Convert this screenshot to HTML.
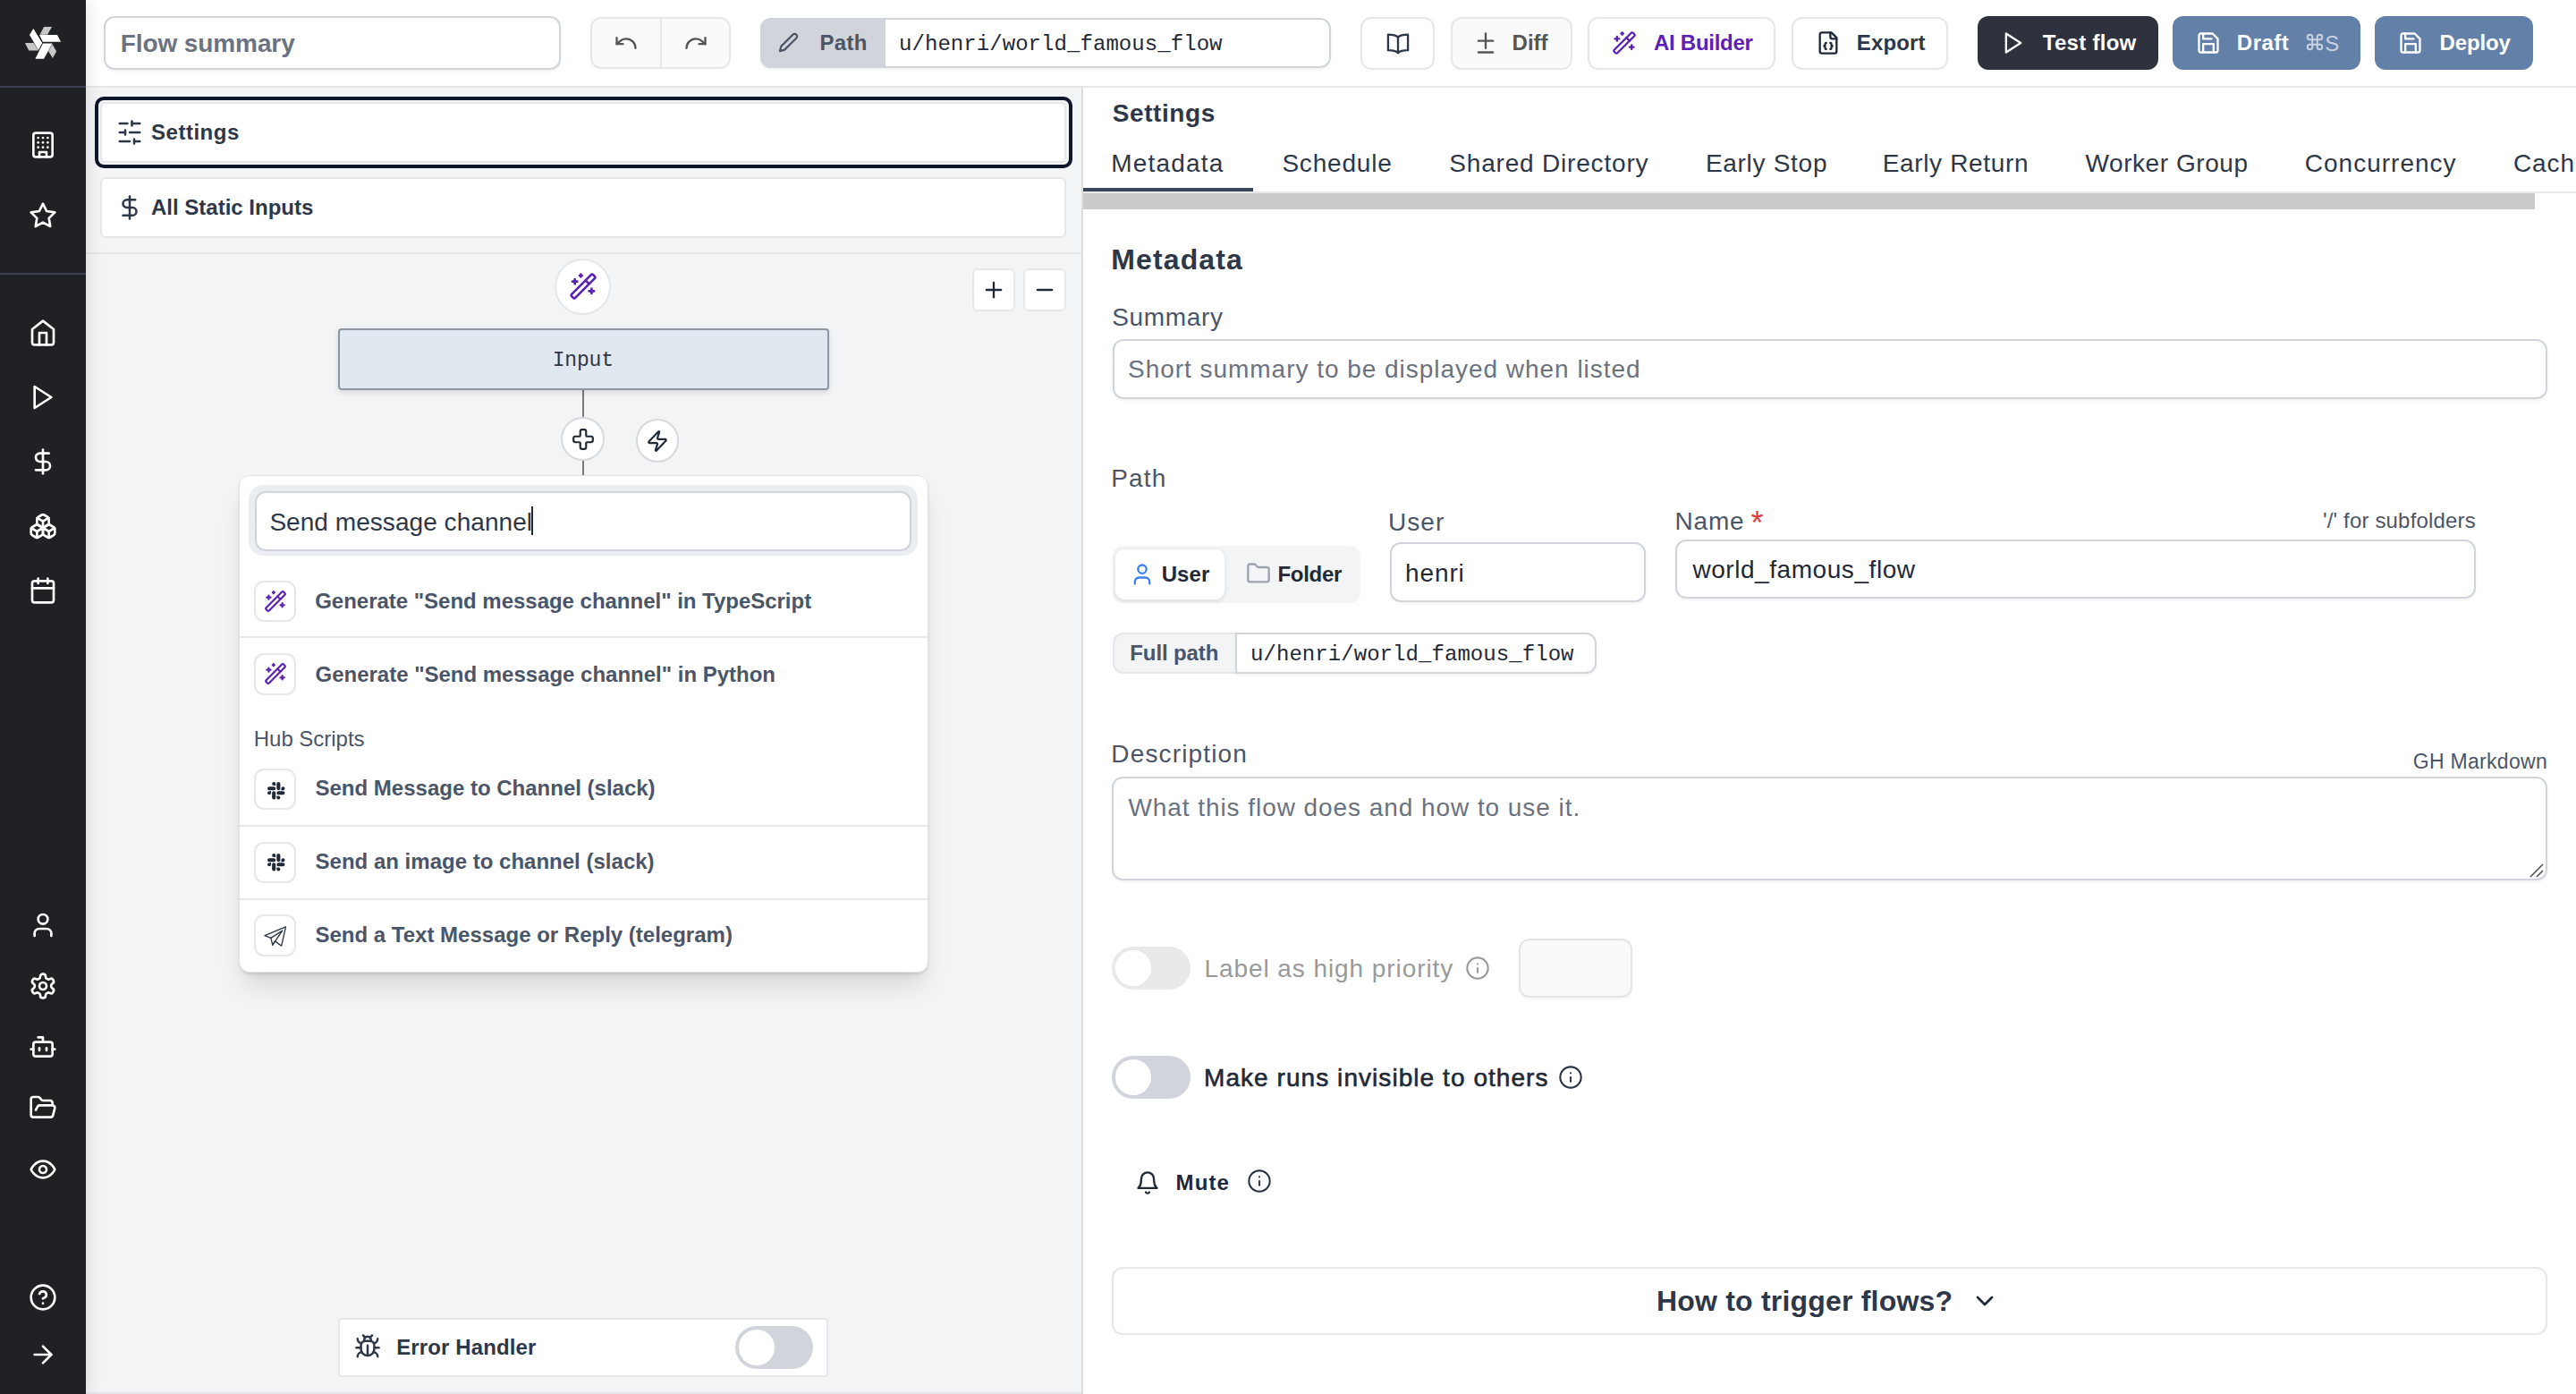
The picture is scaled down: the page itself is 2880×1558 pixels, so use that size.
<!DOCTYPE html>
<html><head><meta charset="utf-8"><title>Flow editor</title>
<style>
html,body{margin:0;padding:0;width:2880px;height:1558px;overflow:hidden;background:#fff}
.b{position:absolute;box-sizing:border-box}
.ic{position:absolute;overflow:visible}
.t{position:absolute;white-space:pre}
.ts{font-family:"Liberation Sans",sans-serif}
.tm{font-family:"Liberation Mono",monospace}
</style></head><body>
<div class="b" style="left:96px;top:98px;width:1114.0px;height:1460.0px;background:#f3f4f6"></div>
<div class="b" style="left:1211px;top:98px;width:1669.0px;height:1460.0px;background:#fff"></div>
<div class="b" style="left:1209px;top:98px;width:2.0px;height:1460.0px;background:#dddddd"></div>
<div class="b" style="left:96px;top:1556px;width:1113.0px;height:2.0px;background:#e5e7eb"></div>
<div class="b" style="left:96px;top:282px;width:1113.0px;height:2.0px;background:#e5e7eb"></div>
<div class="b" style="left:96px;top:0px;width:2784.0px;height:96.0px;background:#fff"></div>
<div class="b" style="left:96px;top:96px;width:2784.0px;height:2.0px;background:#e5e7eb"></div>
<div class="b" style="left:0px;top:0px;width:96.0px;height:1558.0px;background:#202125;box-shadow:3px 0 16px rgba(0,0,0,0.10);z-index:2"></div>
<div class="b" style="left:0px;top:96px;width:96.0px;height:2.0px;background:#3a4051;z-index:3"></div>
<div class="b" style="left:0px;top:305px;width:96.0px;height:2.0px;background:#3a4051;z-index:3"></div>
<svg class="ic" style="left:0;top:0;z-index:3" width="96" height="96" viewBox="0 0 96 96"><polygon fill="#fff" points="33.0,39.0 37.3,32.1 47.2,48.1 42.9,55.9"/><polygon fill="#c8c8c8" points="44.5,38.7 49.1,30.0 58.0,30.0 53.0,38.7"/><polygon fill="#fff" points="44.0,39.0 64.0,39.0 68.1,46.8 47.9,46.8"/><polygon fill="#c8c8c8" points="27.9,48.1 37.6,48.1 42.9,56.4 32.3,56.4"/><polygon fill="#fff" points="47.9,48.6 58.5,48.6 49.1,65.8 39.4,65.8"/><polygon fill="#c8c8c8" points="54.1,57.3 58.5,49.3 63.1,57.6 58.9,64.9"/></svg>
<svg class="ic" style="z-index:3;left:32.0px;top:145.9px" width="32" height="32" viewBox="0 0 24 24" fill="none" stroke="#ffffff" stroke-width="2" stroke-linecap="round" stroke-linejoin="round"><rect width="16" height="20" x="4" y="2" rx="2" ry="2"/><path d="M9 22v-4h6v4"/><path d="M8 6h.01"/><path d="M16 6h.01"/><path d="M12 6h.01"/><path d="M12 10h.01"/><path d="M12 14h.01"/><path d="M16 10h.01"/><path d="M16 14h.01"/><path d="M8 10h.01"/><path d="M8 14h.01"/></svg>
<svg class="ic" style="z-index:3;left:32.0px;top:225.0px" width="32" height="32" viewBox="0 0 24 24" fill="none" stroke="#ffffff" stroke-width="2" stroke-linecap="round" stroke-linejoin="round"><polygon points="12 2 15.09 8.26 22 9.27 17 14.14 18.18 21.02 12 17.77 5.82 21.02 7 14.14 2 9.27 8.91 8.26 12 2"/></svg>
<svg class="ic" style="z-index:3;left:32.0px;top:355.7px" width="32" height="32" viewBox="0 0 24 24" fill="none" stroke="#ffffff" stroke-width="2" stroke-linecap="round" stroke-linejoin="round"><path d="m3 9 9-7 9 7v11a2 2 0 0 1-2 2H5a2 2 0 0 1-2-2z"/><polyline points="9 22 9 12 15 12 15 22"/></svg>
<svg class="ic" style="z-index:3;left:32.0px;top:427.9px" width="32" height="32" viewBox="0 0 24 24" fill="none" stroke="#ffffff" stroke-width="2" stroke-linecap="round" stroke-linejoin="round"><polygon points="5 3 19 12 5 21 5 3"/></svg>
<svg class="ic" style="z-index:3;left:32.0px;top:500.0px" width="32" height="32" viewBox="0 0 24 24" fill="none" stroke="#ffffff" stroke-width="2" stroke-linecap="round" stroke-linejoin="round"><line x1="12" x2="12" y1="2" y2="22"/><path d="M17 5H9.5a3.5 3.5 0 0 0 0 7h5a3.5 3.5 0 0 1 0 7H6"/></svg>
<svg class="ic" style="z-index:3;left:32.0px;top:572.0px" width="32" height="32" viewBox="0 0 24 24" fill="none" stroke="#ffffff" stroke-width="2" stroke-linecap="round" stroke-linejoin="round"><path d="M2.97 12.92A2 2 0 0 0 2 14.63v3.24a2 2 0 0 0 .97 1.71l3 1.8a2 2 0 0 0 2.060 0L12 19v-5.5l-5-3-4.03 2.420Z"/><path d="m7 16.5-4.740-2.850"/><path d="m7 16.5 5-3"/><path d="M7 16.5v5.170"/><path d="M12 13.5V19l3.970 2.380a2 2 0 0 0 2.060 0l3-1.8a2 2 0 0 0 .970-1.710v-3.240a2 2 0 0 0-.970-1.710L17 10.5l-5 3Z"/><path d="m17 16.5-5-3"/><path d="m17 16.5 4.740-2.850"/><path d="M17 16.5v5.170"/><path d="M7.970 4.420A2 2 0 0 0 7 6.130v4.370l5 3 5-3V6.130a2 2 0 0 0-.970-1.710l-3-1.8a2 2 0 0 0-2.060 0l-3 1.8Z"/><path d="M12 8 7.260 5.150"/><path d="m12 8 4.740-2.850"/><path d="M12 13.5V8"/></svg>
<svg class="ic" style="z-index:3;left:32.0px;top:644.0px" width="32" height="32" viewBox="0 0 24 24" fill="none" stroke="#ffffff" stroke-width="2" stroke-linecap="round" stroke-linejoin="round"><rect width="18" height="18" x="3" y="4" rx="2" ry="2"/><line x1="16" x2="16" y1="2" y2="6"/><line x1="8" x2="8" y1="2" y2="6"/><line x1="3" x2="21" y1="10" y2="10"/></svg>
<svg class="ic" style="z-index:3;left:32.0px;top:1018.0px" width="32" height="32" viewBox="0 0 24 24" fill="none" stroke="#ffffff" stroke-width="2" stroke-linecap="round" stroke-linejoin="round"><path d="M19 21v-2a4 4 0 0 0-4-4H9a4 4 0 0 0-4 4v2"/><circle cx="12" cy="7" r="4"/></svg>
<svg class="ic" style="z-index:3;left:32.0px;top:1086.0px" width="32" height="32" viewBox="0 0 24 24" fill="none" stroke="#ffffff" stroke-width="2" stroke-linecap="round" stroke-linejoin="round"><path d="M12.22 2h-.44a2 2 0 0 0-2 2v.18a2 2 0 0 1-1 1.73l-.43.25a2 2 0 0 1-2 0l-.15-.08a2 2 0 0 0-2.73.73l-.22.38a2 2 0 0 0 .73 2.73l.15.1a2 2 0 0 1 1 1.72v.51a2 2 0 0 1-1 1.74l-.15.09a2 2 0 0 0-.73 2.73l.22.38a2 2 0 0 0 2.73.73l.15-.08a2 2 0 0 1 2 0l.43.25a2 2 0 0 1 1 1.73V20a2 2 0 0 0 2 2h.44a2 2 0 0 0 2-2v-.18a2 2 0 0 1 1-1.73l.43-.25a2 2 0 0 1 2 0l.15.08a2 2 0 0 0 2.73-.73l.22-.39a2 2 0 0 0-.73-2.73l-.15-.08a2 2 0 0 1-1-1.74v-.5a2 2 0 0 1 1-1.74l.15-.09a2 2 0 0 0 .73-2.73l-.22-.38a2 2 0 0 0-2.73-.73l-.15.08a2 2 0 0 1-2 0l-.43-.25a2 2 0 0 1-1-1.73V4a2 2 0 0 0-2-2z"/><circle cx="12" cy="12" r="3"/></svg>
<svg class="ic" style="z-index:3;left:32.0px;top:1153.5px" width="32" height="32" viewBox="0 0 24 24" fill="none" stroke="#ffffff" stroke-width="2" stroke-linecap="round" stroke-linejoin="round"><path d="M12 8V4H8"/><rect width="16" height="12" x="4" y="8" rx="2"/><path d="M2 14h2"/><path d="M20 14h2"/><path d="M15 13v2"/><path d="M9 13v2"/></svg>
<svg class="ic" style="z-index:3;left:32.0px;top:1221.7px" width="32" height="32" viewBox="0 0 24 24" fill="none" stroke="#ffffff" stroke-width="2" stroke-linecap="round" stroke-linejoin="round"><path d="m6 14 1.5-2.9A2 2 0 0 1 9.24 10H20a2 2 0 0 1 1.94 2.5l-1.54 6a2 2 0 0 1-1.95 1.5H4a2 2 0 0 1-2-2V5a2 2 0 0 1 2-2h3.9a2 2 0 0 1 1.69.9l.81 1.2a2 2 0 0 0 1.67.9H18a2 2 0 0 1 2 2v2"/></svg>
<svg class="ic" style="z-index:3;left:32.0px;top:1290.7px" width="32" height="32" viewBox="0 0 24 24" fill="none" stroke="#ffffff" stroke-width="2" stroke-linecap="round" stroke-linejoin="round"><path d="M2 12s3-7 10-7 10 7 10 7-3 7-10 7-10-7-10-7Z"/><circle cx="12" cy="12" r="3"/></svg>
<svg class="ic" style="z-index:3;left:32.0px;top:1434.4px" width="32" height="32" viewBox="0 0 24 24" fill="none" stroke="#ffffff" stroke-width="2" stroke-linecap="round" stroke-linejoin="round"><circle cx="12" cy="12" r="10"/><path d="M9.09 9a3 3 0 0 1 5.83 1c0 2-3 3-3 3"/><path d="M12 17h.01"/></svg>
<svg class="ic" style="z-index:3;left:32.0px;top:1498.0px" width="32" height="32" viewBox="0 0 24 24" fill="none" stroke="#ffffff" stroke-width="2" stroke-linecap="round" stroke-linejoin="round"><path d="M5 12h14"/><path d="m12 5 7 7-7 7"/></svg>
<div class="b" style="left:116px;top:18px;width:511.0px;height:60.0px;border:2px solid #d1d5db;border-radius:12px;background:#fff;box-shadow:0 2px 3px rgba(0,0,0,0.05)"></div>
<div class="b" style="left:660px;top:18.5px;width:157.0px;height:58.5px;border:2px solid #e5e7eb;border-radius:12px;background:#fafafa"></div>
<div class="b" style="left:738px;top:19px;width:2.0px;height:57.0px;background:#e5e7eb"></div>
<svg class="ic" style="left:685.8px;top:33.9px" width="28" height="28" viewBox="0 0 24 24" fill="none" stroke="#555555" stroke-width="2" stroke-linecap="round" stroke-linejoin="round"><path d="M3 7v6h6"/><path d="M21 17a9 9 0 0 0-9-9 9 9 0 0 0-6 2.3L3 13"/></svg>
<svg class="ic" style="left:764.1px;top:33.9px" width="28" height="28" viewBox="0 0 24 24" fill="none" stroke="#555555" stroke-width="2" stroke-linecap="round" stroke-linejoin="round"><path d="M21 7v6h-6"/><path d="M3 17a9 9 0 0 1 9-9 9 9 0 0 1 6 2.3l3 2.7"/></svg>
<div class="b" style="left:850px;top:20px;width:638.0px;height:55.5px;border:2px solid #d1d5db;border-radius:12px;background:#fff;box-shadow:0 2px 3px rgba(0,0,0,0.05)"></div>
<div class="b" style="left:850px;top:20px;width:140.0px;height:55.5px;background:#d1d5db;border-radius:12px 0 0 12px"></div>
<svg class="ic" style="left:870.0px;top:36.0px" width="23" height="23" viewBox="0 0 24 24" fill="none" stroke="#4a5568" stroke-width="2.3" stroke-linecap="round" stroke-linejoin="round"><path d="M17 3a2.85 2.83 0 1 1 4 4L7.5 20.5 2 22l1.5-5.5Z"/></svg>
<div class="b" style="left:1521px;top:18.5px;width:83.0px;height:59.0px;border:2px solid #e5e7eb;border-radius:12px;background:#fff"></div>
<svg class="ic" style="left:1549.0px;top:34.0px" width="28" height="28" viewBox="0 0 24 24" fill="none" stroke="#2e3748" stroke-width="2" stroke-linecap="round" stroke-linejoin="round"><path d="M12 6.5C10.5 5 8 4 2.5 4v15c5.5 0 8 1 9.5 2.5 1.5-1.5 4-2.5 9.5-2.5V4C16 4 13.5 5 12 6.5Z"/><path d="M12 6.5v15"/></svg>
<div class="b" style="left:1621.5px;top:18.5px;width:136.0px;height:59.0px;border:2px solid #e5e7eb;border-radius:12px;background:#fafafa"></div>
<svg class="ic" style="left:1646.5px;top:34.2px" width="28" height="28" viewBox="0 0 24 24" fill="none" stroke="#555555" stroke-width="2" stroke-linecap="round" stroke-linejoin="round"><path d="M12 3v14"/><path d="M5 10h14"/><path d="M5 21h14"/></svg>
<div class="b" style="left:1774.5px;top:18.5px;width:210.5px;height:59.0px;border:2px solid #e5e7eb;border-radius:12px;background:#fff"></div>
<svg class="ic" style="left:1801.9px;top:33.8px" width="28" height="28" viewBox="0 0 24 24" fill="none" stroke="#5b21b6" stroke-width="2" stroke-linecap="round" stroke-linejoin="round"><path d="m21.64 3.64-1.28-1.28a1.21 1.21 0 0 0-1.72 0L2.36 18.64a1.21 1.21 0 0 0 0 1.72l1.28 1.28a1.2 1.2 0 0 0 1.72 0L21.640 5.360a1.2 1.2 0 0 0 0-1.720"/><path d="m14 7 3 3"/><path d="M5 6v4"/><path d="M19 14v4"/><path d="M10 2v2"/><path d="M7 8H3"/><path d="M21 16h-4"/><path d="M11 3H9"/></svg>
<div class="b" style="left:2002.5px;top:18.5px;width:175.5px;height:59.0px;border:2px solid #e5e7eb;border-radius:12px;background:#fff"></div>
<svg class="ic" style="left:2029.8px;top:33.8px" width="28" height="28" viewBox="0 0 24 24" fill="none" stroke="#1f2937" stroke-width="2" stroke-linecap="round" stroke-linejoin="round"><path d="M15 2H6a2 2 0 0 0-2 2v16a2 2 0 0 0 2 2h12a2 2 0 0 0 2-2V7Z"/><path d="M14 2v4a2 2 0 0 0 2 2h4"/><path d="M10 12a1 1 0 0 0-1 1v1a1 1 0 0 1-1 1 1 1 0 0 1 1 1v1a1 1 0 0 0 1 1"/><path d="M14 18a1 1 0 0 0 1-1v-1a1 1 0 0 1 1-1 1 1 0 0 1-1-1v-1a1 1 0 0 0-1-1"/></svg>
<div class="b" style="left:2211px;top:18px;width:202.0px;height:60.0px;border-radius:12px;background:#2e323e"></div>
<svg class="ic" style="left:2237.0px;top:34.0px" width="28" height="28" viewBox="0 0 24 24" fill="none" stroke="#ffffff" stroke-width="2" stroke-linecap="round" stroke-linejoin="round"><polygon points="5 3 19 12 5 21 5 3"/></svg>
<div class="b" style="left:2429px;top:18px;width:209.7px;height:60.0px;border-radius:12px;background:#6380a9"></div>
<svg class="ic" style="left:2455.0px;top:33.9px" width="28" height="28" viewBox="0 0 24 24" fill="none" stroke="#ffffff" stroke-width="2" stroke-linecap="round" stroke-linejoin="round"><path d="M19 21H5a2 2 0 0 1-2-2V5a2 2 0 0 1 2-2h11l5 5v11a2 2 0 0 1-2 2z"/><polyline points="17 21 17 13 7 13 7 21"/><polyline points="7 3 7 8 15 8"/></svg>
<div class="b" style="left:2655px;top:18px;width:177.0px;height:60.0px;border-radius:12px;background:#6380a9"></div>
<svg class="ic" style="left:2681.0px;top:33.9px" width="28" height="28" viewBox="0 0 24 24" fill="none" stroke="#ffffff" stroke-width="2" stroke-linecap="round" stroke-linejoin="round"><path d="M19 21H5a2 2 0 0 1-2-2V5a2 2 0 0 1 2-2h11l5 5v11a2 2 0 0 1-2 2z"/><polyline points="17 21 17 13 7 13 7 21"/><polyline points="7 3 7 8 15 8"/></svg>
<svg class="ic" style="left:2576.5px;top:36px" width="22" height="22" viewBox="0 0 24 24" fill="none" stroke="#c9d2e0" stroke-width="2.2"><path d="M15 6v12a3 3 0 1 0 3-3H6a3 3 0 1 0 3 3V6a3 3 0 1 0-3 3h12a3 3 0 1 0-3-3"/></svg>
<div class="b" style="left:106px;top:108px;width:1093.0px;height:80.0px;border:4px solid #0f172a;border-radius:10px"></div>
<div class="b" style="left:112px;top:114px;width:1080.0px;height:68.0px;border:2px solid #e5e7eb;border-radius:6px;background:#fff"></div>
<svg class="ic" style="left:130.3px;top:133.0px" width="30" height="30" viewBox="0 0 24 24" fill="none" stroke="#2e3748" stroke-width="2" stroke-linecap="round" stroke-linejoin="round"><line x1="21" x2="14" y1="4" y2="4"/><line x1="10" x2="3" y1="4" y2="4"/><line x1="21" x2="12" y1="12" y2="12"/><line x1="8" x2="3" y1="12" y2="12"/><line x1="21" x2="16" y1="20" y2="20"/><line x1="12" x2="3" y1="20" y2="20"/><line x1="14" x2="14" y1="2" y2="6"/><line x1="8" x2="8" y1="10" y2="14"/><line x1="16" x2="16" y1="18" y2="22"/></svg>
<div class="b" style="left:112px;top:198px;width:1080.0px;height:68.0px;border:2px solid #e5e7eb;border-radius:6px;background:#fff"></div>
<svg class="ic" style="left:130.2px;top:217.0px" width="30" height="30" viewBox="0 0 24 24" fill="none" stroke="#2e3748" stroke-width="2" stroke-linecap="round" stroke-linejoin="round"><line x1="12" x2="12" y1="2" y2="22"/><path d="M17 5H9.5a3.5 3.5 0 0 0 0 7h5a3.5 3.5 0 0 1 0 7H6"/></svg>
<div class="b" style="left:620px;top:288.5px;width:63.0px;height:63.0px;border:2px solid #e5e7eb;border-radius:50%;background:#fff"></div>
<svg class="ic" style="left:635.5px;top:303.5px" width="32" height="32" viewBox="0 0 24 24" fill="none" stroke="#5b21b6" stroke-width="2" stroke-linecap="round" stroke-linejoin="round"><path d="m21.64 3.64-1.28-1.28a1.21 1.21 0 0 0-1.72 0L2.36 18.64a1.21 1.21 0 0 0 0 1.72l1.28 1.28a1.2 1.2 0 0 0 1.72 0L21.640 5.360a1.2 1.2 0 0 0 0-1.720"/><path d="m14 7 3 3"/><path d="M5 6v4"/><path d="M19 14v4"/><path d="M10 2v2"/><path d="M7 8H3"/><path d="M21 16h-4"/><path d="M11 3H9"/></svg>
<div class="b" style="left:1087px;top:300px;width:48.0px;height:48.0px;border:2px solid #e5e7eb;border-radius:6px;background:#fff"></div>
<svg class="ic" style="left:1097.0px;top:310.0px" width="28" height="28" viewBox="0 0 24 24" fill="none" stroke="#1f2937" stroke-width="2" stroke-linecap="round" stroke-linejoin="round"><path d="M5 12h14"/><path d="M12 5v14"/></svg>
<div class="b" style="left:1144px;top:300px;width:48.0px;height:48.0px;border:2px solid #e5e7eb;border-radius:6px;background:#fff"></div>
<svg class="ic" style="left:1154.0px;top:310.0px" width="28" height="28" viewBox="0 0 24 24" fill="none" stroke="#1f2937" stroke-width="2" stroke-linecap="round" stroke-linejoin="round"><path d="M5 12h14"/></svg>
<div class="b" style="left:651px;top:436px;width:2.0px;height:95.0px;background:#7a7a7a"></div>
<div class="b" style="left:377.5px;top:367.3px;width:549.0px;height:69.0px;border:2px solid #8f96a3;border-radius:4px;background:#e2e8f0;box-shadow:0 3px 6px rgba(0,0,0,0.12)"></div>
<div class="b" style="left:627.4px;top:466.3px;width:48.7px;height:49.2px;border:2px solid #d6d9de;border-radius:50%;background:#fff"></div>
<svg class="ic" style="left:638.8px;top:478.0px" width="26" height="26" viewBox="0 0 24 24" fill="none" stroke="#1f2937" stroke-width="2" stroke-linecap="round" stroke-linejoin="round"><path d="M4 9a2 2 0 0 0-2 2v2a2 2 0 0 0 2 2h4a1 1 0 0 1 1 1v4a2 2 0 0 0 2 2h2a2 2 0 0 0 2-2v-4a1 1 0 0 1 1-1h4a2 2 0 0 0 2-2v-2a2 2 0 0 0-2-2h-4a1 1 0 0 1-1-1V4a2 2 0 0 0-2-2h-2a2 2 0 0 0-2 2v4a1 1 0 0 1-1 1z"/></svg>
<div class="b" style="left:710.6px;top:468.2px;width:48.4px;height:48.8px;border:2px solid #d6d9de;border-radius:50%;background:#fff"></div>
<svg class="ic" style="left:721.8px;top:479.6px" width="26" height="26" viewBox="0 0 24 24" fill="none" stroke="#1f2937" stroke-width="2" stroke-linecap="round" stroke-linejoin="round"><path d="M4 14a1 1 0 0 1-.78-1.63l9.9-10.2a.5.5 0 0 1 .86.46l-1.92 6.02A1 1 0 0 0 13 10h7a1 1 0 0 1 .78 1.63l-9.9 10.2a.5.5 0 0 1-.86-.46l1.92-6.02A1 1 0 0 0 11 14z"/></svg>
<div class="b" style="left:266.5px;top:530.5px;width:771.0px;height:556.5px;border:1px solid #e1e3e7;border-radius:12px;background:#fff;box-shadow:0 2px 3px rgba(0,0,0,0.08),0 20px 30px -6px rgba(0,0,0,0.12),0 8px 12px -8px rgba(0,0,0,0.10)"></div>
<div class="b" style="left:277.7px;top:542px;width:748.3px;height:79.1px;border-radius:16px;background:#eaedf1"></div>
<div class="b" style="left:285px;top:548.5px;width:734.0px;height:67.1px;border:2px solid #d1d5db;border-radius:12px;background:#fff"></div>
<div class="b" style="left:594px;top:566px;width:2.0px;height:32.0px;background:#1f2937"></div>
<div class="b" style="left:284px;top:648.8px;width:47.3px;height:46.1px;border:2px solid #e5e7eb;border-radius:11px;background:#fff"></div>
<div class="b" style="left:284px;top:730.4px;width:47.3px;height:46.6px;border:2px solid #e5e7eb;border-radius:11px;background:#fff"></div>
<div class="b" style="left:284px;top:859px;width:47.3px;height:46.0px;border:2px solid #e5e7eb;border-radius:11px;background:#fff"></div>
<div class="b" style="left:284px;top:940.7px;width:47.3px;height:46.6px;border:2px solid #e5e7eb;border-radius:11px;background:#fff"></div>
<div class="b" style="left:284px;top:1022.4px;width:47.3px;height:46.6px;border:2px solid #e5e7eb;border-radius:11px;background:#fff"></div>
<div class="b" style="left:267.5px;top:711px;width:769.0px;height:2.0px;background:#e5e7eb"></div>
<div class="b" style="left:267.5px;top:922px;width:769.0px;height:2.0px;background:#e5e7eb"></div>
<div class="b" style="left:267.5px;top:1004px;width:769.0px;height:2.0px;background:#e5e7eb"></div>
<svg class="ic" style="left:295.0px;top:658.9px" width="26" height="26" viewBox="0 0 24 24" fill="none" stroke="#5b21b6" stroke-width="2" stroke-linecap="round" stroke-linejoin="round"><path d="m21.64 3.64-1.28-1.28a1.21 1.21 0 0 0-1.72 0L2.36 18.64a1.21 1.21 0 0 0 0 1.72l1.28 1.28a1.2 1.2 0 0 0 1.72 0L21.640 5.360a1.2 1.2 0 0 0 0-1.720"/><path d="m14 7 3 3"/><path d="M5 6v4"/><path d="M19 14v4"/><path d="M10 2v2"/><path d="M7 8H3"/><path d="M21 16h-4"/><path d="M11 3H9"/></svg>
<svg class="ic" style="left:295.2px;top:740.2px" width="26" height="26" viewBox="0 0 24 24" fill="none" stroke="#5b21b6" stroke-width="2" stroke-linecap="round" stroke-linejoin="round"><path d="m21.64 3.64-1.28-1.28a1.21 1.21 0 0 0-1.72 0L2.36 18.64a1.21 1.21 0 0 0 0 1.72l1.28 1.28a1.2 1.2 0 0 0 1.72 0L21.640 5.360a1.2 1.2 0 0 0 0-1.720"/><path d="m14 7 3 3"/><path d="M5 6v4"/><path d="M19 14v4"/><path d="M10 2v2"/><path d="M7 8H3"/><path d="M21 16h-4"/><path d="M11 3H9"/></svg>
<svg class="ic" style="left:290px;top:1030px" width="36" height="32" viewBox="290 1030 36 32" fill="none" stroke="#2e3748" stroke-width="1.35" stroke-linejoin="round" stroke-linecap="round"><path d="M319.5 1035.8 296 1045.6 302.8 1048.4 304.8 1056.2 307.6 1051.9 314.7 1057.2Z"/><path d="M302.8 1048.4 315.7 1040.1 304.8 1056.2"/></svg>
<svg class="ic" style="left:298.6px;top:873.9px" width="19.5" height="19.5" viewBox="0 0 24 24" fill="#1f2937"><path d="M5.042 15.165a2.528 2.528 0 0 1-2.52 2.523A2.528 2.528 0 0 1 0 15.165a2.527 2.527 0 0 1 2.522-2.52h2.52v2.52zM6.313 15.165a2.527 2.527 0 0 1 2.521-2.52 2.527 2.527 0 0 1 2.521 2.52v6.313A2.528 2.528 0 0 1 8.834 24a2.528 2.528 0 0 1-2.521-2.522v-6.313zM8.834 5.042a2.528 2.528 0 0 1-2.521-2.52A2.528 2.528 0 0 1 8.834 0a2.528 2.528 0 0 1 2.521 2.522v2.52H8.834zM8.834 6.313a2.528 2.528 0 0 1 2.521 2.521 2.528 2.528 0 0 1-2.521 2.521H2.522A2.528 2.528 0 0 1 0 8.834a2.528 2.528 0 0 1 2.522-2.521h6.312zM18.956 8.834a2.528 2.528 0 0 1 2.522-2.521A2.528 2.528 0 0 1 24 8.834a2.528 2.528 0 0 1-2.522 2.521h-2.522V8.834zM17.688 8.834a2.528 2.528 0 0 1-2.523 2.521 2.527 2.527 0 0 1-2.52-2.521V2.522A2.527 2.527 0 0 1 15.165 0a2.528 2.528 0 0 1 2.523 2.522v6.312zM15.165 18.956a2.528 2.528 0 0 1 2.523 2.522A2.528 2.528 0 0 1 15.165 24a2.527 2.527 0 0 1-2.52-2.522v-2.522h2.52zM15.165 17.688a2.527 2.527 0 0 1-2.52-2.523 2.526 2.526 0 0 1 2.52-2.52h6.313A2.527 2.527 0 0 1 24 15.165a2.528 2.528 0 0 1-2.522 2.523h-6.313z"/></svg>
<svg class="ic" style="left:298.6px;top:954.2px" width="19.5" height="19.5" viewBox="0 0 24 24" fill="#1f2937"><path d="M5.042 15.165a2.528 2.528 0 0 1-2.52 2.523A2.528 2.528 0 0 1 0 15.165a2.527 2.527 0 0 1 2.522-2.52h2.52v2.52zM6.313 15.165a2.527 2.527 0 0 1 2.521-2.52 2.527 2.527 0 0 1 2.521 2.52v6.313A2.528 2.528 0 0 1 8.834 24a2.528 2.528 0 0 1-2.521-2.522v-6.313zM8.834 5.042a2.528 2.528 0 0 1-2.521-2.52A2.528 2.528 0 0 1 8.834 0a2.528 2.528 0 0 1 2.521 2.522v2.52H8.834zM8.834 6.313a2.528 2.528 0 0 1 2.521 2.521 2.528 2.528 0 0 1-2.521 2.521H2.522A2.528 2.528 0 0 1 0 8.834a2.528 2.528 0 0 1 2.522-2.521h6.312zM18.956 8.834a2.528 2.528 0 0 1 2.522-2.521A2.528 2.528 0 0 1 24 8.834a2.528 2.528 0 0 1-2.522 2.521h-2.522V8.834zM17.688 8.834a2.528 2.528 0 0 1-2.523 2.521 2.527 2.527 0 0 1-2.52-2.521V2.522A2.527 2.527 0 0 1 15.165 0a2.528 2.528 0 0 1 2.523 2.522v6.312zM15.165 18.956a2.528 2.528 0 0 1 2.523 2.522A2.528 2.528 0 0 1 15.165 24a2.527 2.527 0 0 1-2.52-2.522v-2.522h2.52zM15.165 17.688a2.527 2.527 0 0 1-2.52-2.523 2.526 2.526 0 0 1 2.52-2.52h6.313A2.527 2.527 0 0 1 24 15.165a2.528 2.528 0 0 1-2.522 2.523h-6.313z"/></svg>
<div class="b" style="left:377.6px;top:1473px;width:548.4px;height:66.0px;border:2px solid #e5e7eb;border-radius:4px;background:#fff"></div>
<svg class="ic" style="left:395.9px;top:1490.0px" width="30" height="30" viewBox="0 0 24 24" fill="none" stroke="#2e3748" stroke-width="2" stroke-linecap="round" stroke-linejoin="round"><path d="m8 2 1.88 1.88"/><path d="M14.12 3.88 16 2"/><path d="M9 7.13v-1a3.003 3.003 0 1 1 6 0v1"/><path d="M12 20c-3.3 0-6-2.7-6-6v-3a4 4 0 0 1 4-4h4a4 4 0 0 1 4 4v3c0 3.3-2.7 6-6 6"/><path d="M12 20v-9"/><path d="M6.53 9C4.6 8.8 3 7.1 3 5"/><path d="M6 13H2"/><path d="M3 21c0-2.1 1.7-3.9 3.8-4"/><path d="M20.97 5c0 2.1-1.6 3.8-3.5 4"/><path d="M22 13h-4"/><path d="M17.2 17c2.1.1 3.8 1.9 3.8 4"/></svg>
<div class="b" style="left:821.7px;top:1481.7px;width:87.1px;height:48.3px;border-radius:24px;background:#d1d5db"></div>
<div class="b" style="left:825.7px;top:1485.7px;width:40.3px;height:40.3px;border-radius:50%;background:#fff"></div>
<div class="b" style="left:1211px;top:214px;width:1669.0px;height:2.0px;background:#e5e7eb"></div>
<div class="b" style="left:1211px;top:210px;width:190.0px;height:4.0px;background:#3b4658"></div>
<div class="b" style="left:1211px;top:216px;width:1623.0px;height:17.5px;background:#cbcbcb"></div>
<div class="b" style="left:1243.5px;top:378.5px;width:1604.5px;height:67.0px;border:2px solid #d1d5db;border-radius:12px;background:#fff;box-shadow:0 2px 3px rgba(0,0,0,0.05)"></div>
<div class="b" style="left:1243.6px;top:610px;width:277.0px;height:64.0px;border-radius:12px;background:#f3f4f6"></div>
<div class="b" style="left:1246.8px;top:614px;width:122.0px;height:56.0px;border-radius:10px;background:#fff;box-shadow:0 2px 6px rgba(0,0,0,0.10)"></div>
<svg class="ic" style="left:1262.8px;top:627.5px" width="28" height="28" viewBox="0 0 24 24" fill="none" stroke="#3b82f6" stroke-width="2" stroke-linecap="round" stroke-linejoin="round"><path d="M19 21v-2a4 4 0 0 0-4-4H9a4 4 0 0 0-4 4v2"/><circle cx="12" cy="7" r="4"/></svg>
<svg class="ic" style="left:1392.8px;top:627.2px" width="28" height="28" viewBox="0 0 24 24" fill="none" stroke="#9ca3af" stroke-width="2" stroke-linecap="round" stroke-linejoin="round"><path d="M20 20a2 2 0 0 0 2-2V8a2 2 0 0 0-2-2h-7.9a2 2 0 0 1-1.69-.9L9.6 3.9A2 2 0 0 0 7.93 3H4a2 2 0 0 0-2 2v13a2 2 0 0 0 2 2Z"/></svg>
<div class="b" style="left:1553.6px;top:606.3px;width:286.4px;height:67.1px;border:2px solid #d1d5db;border-radius:12px;background:#fff;box-shadow:0 2px 3px rgba(0,0,0,0.05)"></div>
<div class="b" style="left:1873.4px;top:602.5px;width:894.6px;height:66.5px;border:2px solid #d1d5db;border-radius:12px;background:#fff;box-shadow:0 2px 3px rgba(0,0,0,0.05)"></div>
<span class="t ts" style="left:1957.5px;top:567px;font-size:36px;line-height:36px;color:#dc3c3c">*</span>
<div class="b" style="left:1243.7px;top:706.6px;width:139.3px;height:46.9px;border:2px solid #e5e7eb;border-right:none;border-radius:12px 0 0 12px;background:#f3f4f6"></div>
<div class="b" style="left:1381px;top:706.6px;width:404.4px;height:46.9px;border:2px solid #d1d5db;border-radius:0 12px 12px 0;background:#fff;box-shadow:0 2px 3px rgba(0,0,0,0.05)"></div>
<div class="b" style="left:1243px;top:868px;width:1605.0px;height:116.0px;border:2px solid #d1d5db;border-radius:12px;background:#fff;box-shadow:0 2px 3px rgba(0,0,0,0.05)"></div>
<svg class="ic" style="left:2825px;top:962px" width="20" height="20" viewBox="0 0 20 20" stroke="#555" stroke-width="1.6"><path d="M4 18 18 4M11 18 18 11"/></svg>
<div class="b" style="left:1243px;top:1058px;width:88.0px;height:48.0px;border-radius:24px;background:#e9e9ea"></div>
<div class="b" style="left:1246.5px;top:1062px;width:40.5px;height:40.0px;border-radius:50%;background:#fff"></div>
<svg class="ic" style="left:1638.2px;top:1068.0px" width="28" height="28" viewBox="0 0 24 24" fill="none" stroke="#9a9a9a" stroke-width="1.8" stroke-linecap="round" stroke-linejoin="round"><circle cx="12" cy="12" r="10"/><path d="M12 16v-4"/><path d="M12 8h.01"/></svg>
<div class="b" style="left:1698.4px;top:1048.5px;width:126.6px;height:66.0px;border:2px solid #e5e5e5;border-radius:12px;background:#fafafa;box-shadow:0 2px 3px rgba(0,0,0,0.04)"></div>
<div class="b" style="left:1243px;top:1180px;width:88.0px;height:48.0px;border-radius:24px;background:#d1d5db"></div>
<div class="b" style="left:1246.5px;top:1184px;width:40.5px;height:40.0px;border-radius:50%;background:#fff"></div>
<svg class="ic" style="left:1741.8px;top:1190.2px" width="28" height="28" viewBox="0 0 24 24" fill="none" stroke="#2e3748" stroke-width="1.8" stroke-linecap="round" stroke-linejoin="round"><circle cx="12" cy="12" r="10"/><path d="M12 16v-4"/><path d="M12 8h.01"/></svg>
<svg class="ic" style="left:1269.1px;top:1308.3px" width="28" height="28" viewBox="0 0 24 24" fill="none" stroke="#1f2937" stroke-width="2" stroke-linecap="round" stroke-linejoin="round"><path d="M6 8a6 6 0 0 1 12 0c0 7 3 9 3 9H3s3-2 3-9"/><path d="M10.3 21a1.94 1.94 0 0 0 3.4 0"/></svg>
<svg class="ic" style="left:1394.0px;top:1306.3px" width="28" height="28" viewBox="0 0 24 24" fill="none" stroke="#2e3748" stroke-width="1.8" stroke-linecap="round" stroke-linejoin="round"><circle cx="12" cy="12" r="10"/><path d="M12 16v-4"/><path d="M12 8h.01"/></svg>
<div class="b" style="left:1243px;top:1416px;width:1605.0px;height:76.0px;border:2px solid #e5e7eb;border-radius:12px;background:#fff"></div>
<svg class="ic" style="left:2203.2px;top:1438.2px" width="32" height="32" viewBox="0 0 24 24" fill="none" stroke="#1f2937" stroke-width="2" stroke-linecap="round" stroke-linejoin="round"><path d="m6 9 6 6 6-6"/></svg>
<span class="t ts" style="left:134.7px;top:34.8px;font-size:28px;line-height:28px;font-weight:700;color:#6b7280;letter-spacing:-0.09px;">Flow summary</span>
<span class="t ts" style="left:916.5px;top:35.9px;font-size:24px;line-height:24px;font-weight:700;color:#4a5568;letter-spacing:0.32px;">Path</span>
<span class="t tm" style="left:1005.0px;top:38.0px;font-size:24px;line-height:24px;font-weight:400;color:#1f2937;letter-spacing:0.06px;">u/henri/world_famous_flow</span>
<span class="t ts" style="left:1690.6px;top:35.9px;font-size:24px;line-height:24px;font-weight:700;color:#555555;letter-spacing:0.00px;">Diff</span>
<span class="t ts" style="left:1849.0px;top:36.0px;font-size:24px;line-height:24px;font-weight:700;color:#5b21b6;letter-spacing:-0.28px;">AI Builder</span>
<span class="t ts" style="left:2075.8px;top:36.0px;font-size:24px;line-height:24px;font-weight:700;color:#2e3748;letter-spacing:0.14px;">Export</span>
<span class="t ts" style="left:2283.8px;top:35.9px;font-size:24px;line-height:24px;font-weight:700;color:#ffffff;letter-spacing:0.28px;">Test flow</span>
<span class="t ts" style="left:2500.8px;top:36.0px;font-size:24px;line-height:24px;font-weight:700;color:#ffffff;letter-spacing:0.50px;">Draft</span>
<span class="t ts" style="left:2599.3px;top:36.8px;font-size:24px;line-height:24px;font-weight:400;color:#c9d2e0;letter-spacing:0.00px;">S</span>
<span class="t ts" style="left:2727.4px;top:36.0px;font-size:24px;line-height:24px;font-weight:700;color:#ffffff;letter-spacing:-0.09px;">Deploy</span>
<span class="t ts" style="left:169.0px;top:136.3px;font-size:24px;line-height:24px;font-weight:700;color:#2e3748;letter-spacing:0.52px;">Settings</span>
<span class="t ts" style="left:169.0px;top:220.0px;font-size:24px;line-height:24px;font-weight:700;color:#2e3748;letter-spacing:0.00px;">All Static Inputs</span>
<span class="t tm" style="left:617.7px;top:392.3px;font-size:23px;line-height:23px;font-weight:400;color:#2e3748;letter-spacing:-0.18px;">Input</span>
<span class="t ts" style="left:301.4px;top:569.7px;font-size:28px;line-height:28px;font-weight:400;color:#2e3748;letter-spacing:0.05px;">Send message channel</span>
<span class="t ts" style="left:352.2px;top:660.1px;font-size:24px;line-height:24px;font-weight:700;color:#4a5568;letter-spacing:-0.02px;">Generate "Send message channel" in TypeScript</span>
<span class="t ts" style="left:352.5px;top:742.1px;font-size:24px;line-height:24px;font-weight:700;color:#4a5568;letter-spacing:-0.01px;">Generate "Send message channel" in Python</span>
<span class="t ts" style="left:283.8px;top:814.2px;font-size:24px;line-height:24px;font-weight:400;color:#4a5568;letter-spacing:-0.03px;">Hub Scripts</span>
<span class="t ts" style="left:352.5px;top:869.4px;font-size:24px;line-height:24px;font-weight:700;color:#4a5568;letter-spacing:-0.00px;">Send Message to Channel (slack)</span>
<span class="t ts" style="left:352.5px;top:951.3px;font-size:24px;line-height:24px;font-weight:700;color:#4a5568;letter-spacing:0.01px;">Send an image to channel (slack)</span>
<span class="t ts" style="left:352.5px;top:1033.2px;font-size:24px;line-height:24px;font-weight:700;color:#4a5568;letter-spacing:0.00px;">Send a Text Message or Reply (telegram)</span>
<span class="t ts" style="left:443.2px;top:1494.1px;font-size:24px;line-height:24px;font-weight:700;color:#2e3748;letter-spacing:0.12px;">Error Handler</span>
<span class="t ts" style="left:1243.7px;top:113.0px;font-size:28px;line-height:28px;font-weight:700;color:#2e3748;letter-spacing:0.60px;">Settings</span>
<span class="t ts" style="left:1242.3px;top:168.7px;font-size:28px;line-height:28px;font-weight:400;color:#2e3748;letter-spacing:1.18px;">Metadata</span>
<span class="t ts" style="left:1433.4px;top:168.7px;font-size:28px;line-height:28px;font-weight:400;color:#2e3748;letter-spacing:0.80px;">Schedule</span>
<span class="t ts" style="left:1620.3px;top:168.7px;font-size:28px;line-height:28px;font-weight:400;color:#2e3748;letter-spacing:0.81px;">Shared Directory</span>
<span class="t ts" style="left:1906.9px;top:168.7px;font-size:28px;line-height:28px;font-weight:400;color:#2e3748;letter-spacing:0.71px;">Early Stop</span>
<span class="t ts" style="left:2104.7px;top:168.7px;font-size:28px;line-height:28px;font-weight:400;color:#2e3748;letter-spacing:0.65px;">Early Return</span>
<span class="t ts" style="left:2331.6px;top:168.7px;font-size:28px;line-height:28px;font-weight:400;color:#2e3748;letter-spacing:0.55px;">Worker Group</span>
<span class="t ts" style="left:2576.8px;top:168.7px;font-size:28px;line-height:28px;font-weight:400;color:#2e3748;letter-spacing:1.00px;">Concurrency</span>
<span class="t ts" style="left:2810.0px;top:168.7px;font-size:28px;line-height:28px;font-weight:400;color:#2e3748;letter-spacing:0.9px">Cache</span>
<span class="t ts" style="left:1242.3px;top:274.0px;font-size:32px;line-height:32px;font-weight:700;color:#2e3748;letter-spacing:1.11px;">Metadata</span>
<span class="t ts" style="left:1243.3px;top:341.0px;font-size:28px;line-height:28px;font-weight:400;color:#4a5568;letter-spacing:0.65px;">Summary</span>
<span class="t ts" style="left:1261.0px;top:399.0px;font-size:28px;line-height:28px;font-weight:400;color:#6b7280;letter-spacing:0.97px;">Short summary to be displayed when listed</span>
<span class="t ts" style="left:1242.2px;top:521.2px;font-size:28px;line-height:28px;font-weight:400;color:#4a5568;letter-spacing:1.16px;">Path</span>
<span class="t ts" style="left:1298.7px;top:629.7px;font-size:24px;line-height:24px;font-weight:700;color:#1f2937;letter-spacing:0.09px;">User</span>
<span class="t ts" style="left:1428.5px;top:629.7px;font-size:24px;line-height:24px;font-weight:700;color:#1f2937;letter-spacing:-0.30px;">Folder</span>
<span class="t ts" style="left:1552.0px;top:569.9px;font-size:28px;line-height:28px;font-weight:400;color:#4a5568;letter-spacing:1.04px;">User</span>
<span class="t ts" style="left:1571.0px;top:626.7px;font-size:28px;line-height:28px;font-weight:400;color:#1f2937;letter-spacing:0.89px;">henri</span>
<span class="t ts" style="left:1872.6px;top:569.0px;font-size:28px;line-height:28px;font-weight:400;color:#4a5568;letter-spacing:0.76px;">Name</span>
<span class="t ts" style="left:2596.9px;top:569.9px;font-size:24px;line-height:24px;font-weight:400;color:#4a5568;letter-spacing:0.17px;">'/' for subfolders</span>
<span class="t ts" style="left:1892.4px;top:623.0px;font-size:28px;line-height:28px;font-weight:400;color:#1f2937;letter-spacing:0.56px;">world_famous_flow</span>
<span class="t ts" style="left:1263.3px;top:718.0px;font-size:24px;line-height:24px;font-weight:700;color:#4a5568;letter-spacing:-0.12px;">Full path</span>
<span class="t tm" style="left:1398.0px;top:719.6px;font-size:24px;line-height:24px;font-weight:400;color:#1f2937;letter-spacing:0.06px;">u/henri/world_famous_flow</span>
<span class="t ts" style="left:1242.3px;top:828.5px;font-size:28px;line-height:28px;font-weight:400;color:#4a5568;letter-spacing:1.15px;">Description</span>
<span class="t ts" style="left:2697.7px;top:839.8px;font-size:23px;line-height:23px;font-weight:400;color:#4a5568;letter-spacing:0.31px;">GH Markdown</span>
<span class="t ts" style="left:1261.4px;top:888.7px;font-size:28px;line-height:28px;font-weight:400;color:#6b7280;letter-spacing:0.94px;">What this flow does and how to use it.</span>
<span class="t ts" style="left:1346.4px;top:1069.4px;font-size:28px;line-height:28px;font-weight:400;color:#9a9a9a;letter-spacing:0.93px;">Label as high priority</span>
<span class="t ts" style="left:1346.0px;top:1190.6px;font-size:28px;line-height:28px;font-weight:400;color:#1f2937;letter-spacing:1.06px;-webkit-text-stroke:0.6px #1f2937">Make runs invisible to others</span>
<span class="t ts" style="left:1314.6px;top:1310.2px;font-size:24px;line-height:24px;font-weight:700;color:#1f2937;letter-spacing:1.12px;">Mute</span>
<span class="t ts" style="left:1852.0px;top:1438.0px;font-size:32px;line-height:32px;font-weight:700;color:#2e3748;letter-spacing:0.20px;">How to trigger flows?</span>
</body></html>
